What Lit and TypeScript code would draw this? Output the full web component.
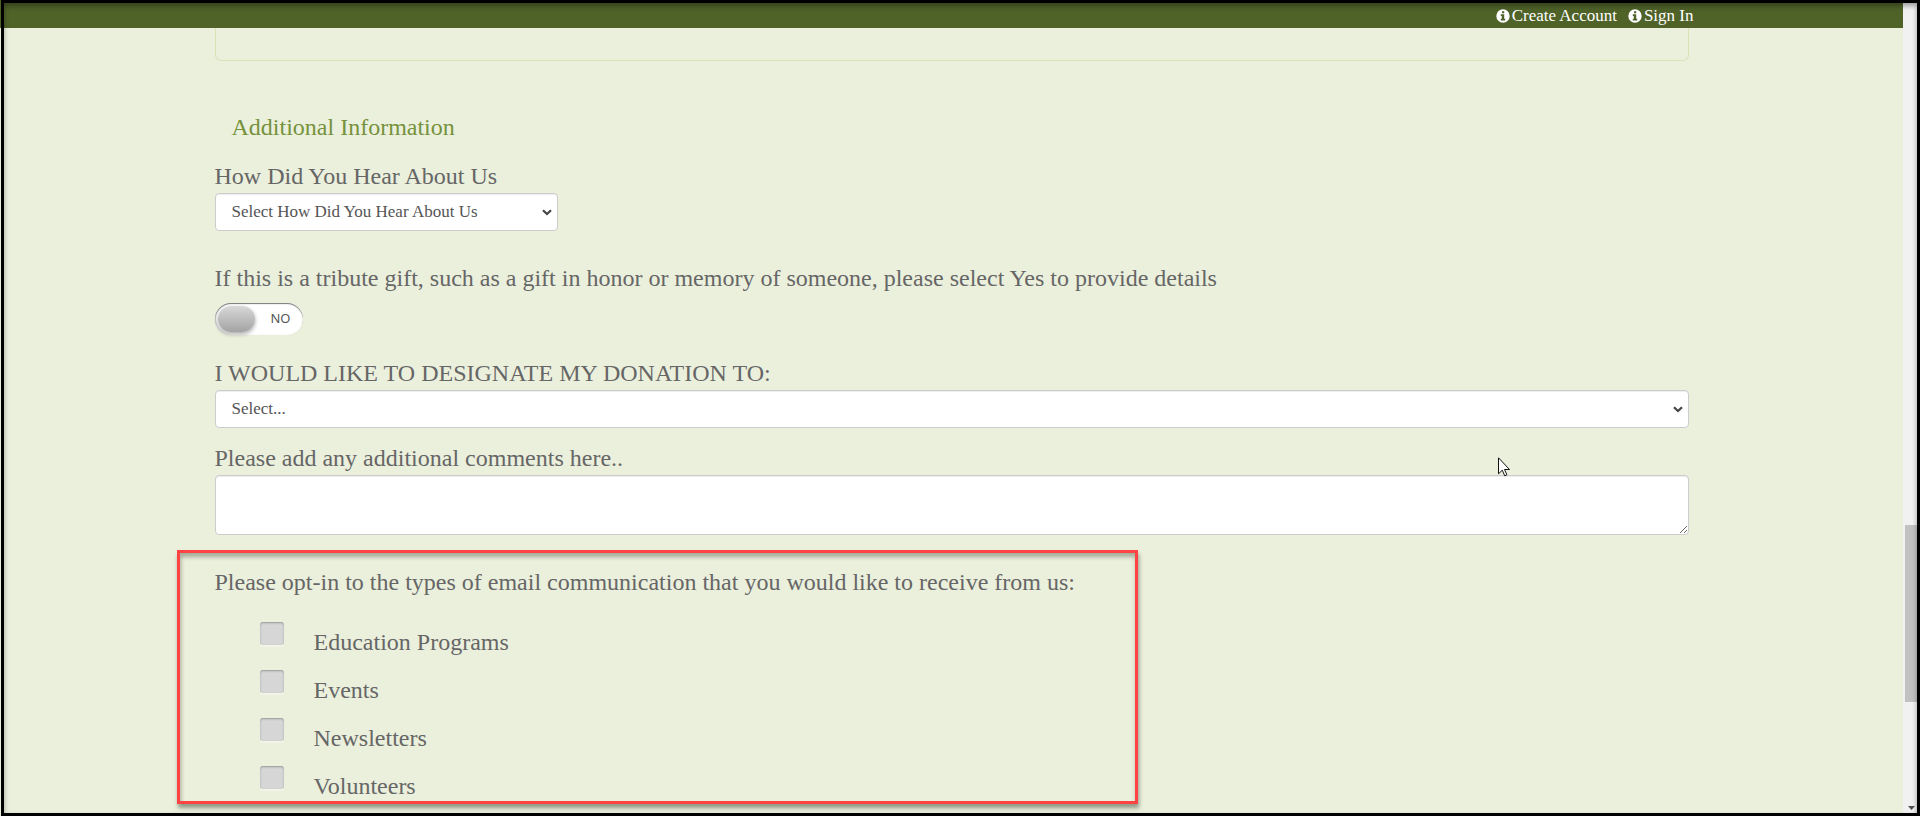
import { LitElement, html, css, svg } from "lit";
import { customElement, state } from "lit/decorators.js";

const infoIcon = svg`<svg class="info" viewBox="0 0 14 14" aria-hidden="true">
  <path fill="currentColor" fill-rule="evenodd" d="M7 .3a6.7 6.7 0 1 0 0 13.4A6.7 6.7 0 0 0 7 .3zM6 2.2h2.2v2H6zM4.8 5.2h3.4v4.6h1v1.7H4.8V9.8h1V6.9h-1z"/>
</svg>`;

@customElement("app-root")
export class AppRoot extends LitElement {
  @state() private tribute = false;

  private topics = ["Education Programs", "Events", "Newsletters", "Volunteers"];

  static styles = css`
    :host {
      display: flex;
      position: relative;
      height: 100vh;
      overflow: hidden;
      background: #ebf0dd;
      color: #666;
      font-family: "Liberation Serif", serif;
      font-size: 24px;
      line-height: 30px;
    }
    * { box-sizing: border-box; }
    .page { flex: 1; min-width: 0; }
    .topbar { height: 28px; background: #4f6228; }
    .topnav {
      display: flex;
      justify-content: flex-end;
      gap: 11px;
      max-width: 1484px;
      margin: 0 auto;
      padding-top: 4px;
      font-size: 17px;
      line-height: 24px;
    }
    .topnav a {
      display: flex;
      align-items: center;
      gap: 2px;
      color: #fff;
      text-decoration: none;
    }
    .info { width: 14px; height: 14px; }
    .content { max-width: 1474px; margin: 0 auto; }
    .panel {
      height: 33px;
      border: 1px solid #d9e3b5;
      border-top: 0;
      border-radius: 0 0 6px 6px;
    }
    h2 {
      margin: 51px 0 19px;
      padding-left: 17px;
      font-size: 24px;
      font-weight: normal;
      line-height: 30px;
      color: #76923c;
    }
    .label { display: block; padding-bottom: 2px; }
    .control {
      display: block;
      width: 100%;
      height: 38px;
      padding: 6px 16px;
      border: 1px solid #ccc;
      border-radius: 4px;
      background-color: #fff;
      box-shadow: inset 0 1px 1px rgba(0, 0, 0, 0.075);
      color: #555;
      font-family: inherit;
      font-size: 17px;
      line-height: 24px;
    }
    select.control {
      appearance: none;
      background-image: url("data:image/svg+xml,%3Csvg xmlns='http://www.w3.org/2000/svg' width='10' height='7' viewBox='0 0 10 7'%3E%3Cpath d='M1 1.2l4 3.8 4-3.8' fill='none' stroke='%23444' stroke-width='2.2'/%3E%3C/svg%3E");
      background-repeat: no-repeat;
      background-position: right 5px center;
    }
    .short { width: 343px; max-width: 100%; margin-bottom: 32px; }
    .comments { height: 60px; resize: vertical; }
    .field { margin-bottom: 15px; }
    .switch {
      display: block;
      position: relative;
      width: 88px;
      height: 32px;
      margin: 8px 0 23px;
      border-radius: 16px;
      background: #fff;
      box-shadow: inset 0 1px 1px #777, inset 1px 0 1px #ccc;
      font-family: "Noto Sans", sans-serif;
      font-size: 13px;
      line-height: 30px;
      color: #555;
      cursor: pointer;
    }
    .switch input { position: absolute; inset: 0; margin: 0; opacity: 0; }
    .switch-text { display: block; padding: 0 12px; text-align: right; }
    .knob {
      position: absolute;
      top: 3px;
      left: 3px;
      width: 37px;
      height: 26px;
      border-radius: 13px;
      background: linear-gradient(#d8d8d8, #a3a3a3);
      box-shadow: 0 2px 4px rgba(0, 0, 0, 0.35);
      pointer-events: none;
    }
    input:checked ~ .switch-text { text-align: left; }
    input:checked ~ .knob { left: auto; right: 3px; }
    .optin { position: relative; margin-top: 32px; }
    fieldset { margin: 0; padding: 0; border: 0; min-width: 0; }
    legend { padding: 0; margin-bottom: 25px; }
    .option { display: flex; align-items: flex-start; gap: 30px; height: 48px; padding-left: 45px; }
    .option input {
      appearance: none;
      width: 24px;
      height: 23px;
      margin: 0;
      border-radius: 3px;
      background: #d6d6d6;
      box-shadow: inset 0 1px 2px rgba(0, 0, 0, 0.3), 0 2px 1px rgba(255, 255, 255, 0.4);
    }
    .option input:checked { background: #76923c; }
    .option label { padding-top: 5px; }
    .callout {
      position: absolute;
      top: -17px;
      bottom: 10px;
      left: -38px;
      width: 961px;
      border: 3px solid #ff4242;
      box-shadow: 1px 4px 4px rgba(60, 70, 50, 0.5), inset 1px 4px 4px rgba(60, 70, 50, 0.4);
      pointer-events: none;
    }
    .scrollbar { position: relative; width: 17px; background: #f1f1f1; }
    .thumb { position: absolute; top: 525px; left: 2px; right: 0; height: 177px; background: #c1c1c1; }
    .down { position: absolute; bottom: 6px; left: 5px; width: 7px; height: 4px; }
    .cursor { position: absolute; top: 457px; left: 1498px; width: 12px; height: 20px; pointer-events: none; }
    .frame {
      position: absolute;
      inset: 0 0 0 1px;
      border: 3px solid #000;
      box-shadow: inset 0 3px 5px rgba(0, 0, 0, 0.35);
      pointer-events: none;
    }
  `;

  render() {
    return html`
      <div class="page">
        <header class="topbar">
          <nav class="topnav">
            <a href="#create">${infoIcon}<span>Create Account</span></a>
            <a href="#signin">${infoIcon}<span>Sign In</span></a>
          </nav>
        </header>
        <main class="content">
          <div class="panel"></div>
          <h2>Additional Information</h2>
          <form>
            <label class="label" for="source">How Did You Hear About Us</label>
            <select class="control short" id="source">
              <option>Select How Did You Hear About Us</option>
            </select>
            <label class="label" for="tribute">If this is a tribute gift, such as a gift in honor or memory of someone, please select Yes to provide details</label>
            <label class="switch">
              <input
                type="checkbox"
                role="switch"
                id="tribute"
                .checked=${this.tribute}
                @change=${(e: Event) => (this.tribute = (e.target as HTMLInputElement).checked)}
              />
              <span class="switch-text">${this.tribute ? "YES" : "NO"}</span>
              <span class="knob"></span>
            </label>
            <label class="label" for="fund">I WOULD LIKE TO DESIGNATE MY DONATION TO:</label>
            <select class="control field" id="fund">
              <option>Select...</option>
            </select>
            <label class="label" for="comments">Please add any additional comments here..</label>
            <textarea class="control comments" id="comments"></textarea>
            <div class="optin">
              <fieldset>
                <legend>Please opt-in to the types of email communication that you would like to receive from us:</legend>
                ${this.topics.map(
                  (topic, i) => html`<div class="option">
                    <input type="checkbox" id="topic-${i}" /><label for="topic-${i}">${topic}</label>
                  </div>`
                )}
              </fieldset>
              <div class="callout"></div>
            </div>
          </form>
        </main>
      </div>
      <div class="scrollbar">
        <div class="thumb"></div>
        <svg class="down" viewBox="0 0 7 4"><path fill="#505050" d="M0 0h7L3.5 4z" /></svg>
      </div>
      <svg class="cursor" viewBox="0 0 12 20">
        <path fill="#fff" stroke="#111" d="M.5.8v16l3.8-3.6 2.4 5.6 2.2-1-2.4-5.3h5z" />
      </svg>
      <div class="frame"></div>
    `;
  }
}
